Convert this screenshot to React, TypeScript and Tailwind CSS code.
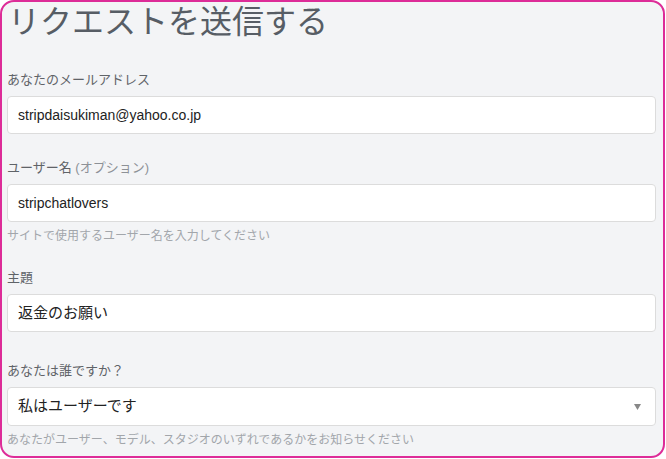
const font = { fontFamily: '"Liberation Sans", "Noto Sans CJK JP", sans-serif' };

function Label({ children }: { children: React.ReactNode }) {
  return <div className="text-[13px] leading-[18px] text-[#5f6368]">{children}</div>;
}

function Field({ value, big }: { value: string; big?: boolean }) {
  return (
    <div
      className={`mt-[7px] h-[38px] flex items-center px-[10px] bg-white border border-[#dcdcdc] rounded-[4px] text-[#222] ${
        big ? 'text-[15px]' : 'text-[14px]'
      }`}
    >
      {value}
    </div>
  );
}

function Help({ children }: { children: React.ReactNode }) {
  return <div className="mt-[6px] text-[12px] leading-[16px] text-[#a2a6ab]">{children}</div>;
}

export default function App() {
  return (
    <div
      style={font}
      className="w-[665px] h-[458px] bg-[#f3f4f6] border-2 border-[#dd2c98] rounded-[14px] pl-[5px] pr-[7px] overflow-hidden"
    >
      <h1 className="text-[32px] leading-[40px] text-[#575d65] font-normal pl-[1px]">リクエストを送信する</h1>

      <div className="mt-[29px]">
        <Label>あなたのメールアドレス</Label>
        <Field value="stripdaisukiman@yahoo.co.jp" />
      </div>

      <div className="mt-[25px]">
        <Label>
          ユーザー名 <span className="text-[#8d9197]">(オプション)</span>
        </Label>
        <Field value="stripchatlovers" />
        <Help>サイトで使用するユーザー名を入力してください</Help>
      </div>

      <div className="mt-[25px]">
        <Label>主題</Label>
        <Field value="返金のお願い" big />
      </div>

      <div className="mt-[30px]">
        <Label>あなたは誰ですか？</Label>
        <div className="mt-[7px] h-[39px] flex items-center justify-between pl-[10px] pr-[14px] bg-white border border-[#dcdcdc] rounded-[4px] text-[15px] text-[#222]">
          <span>私はユーザーです</span>
          <svg width="7" height="6" viewBox="0 0 7 6">
            <path d="M0 0 L7 0 L3.5 6 Z" fill="#888" />
          </svg>
        </div>
        <Help>あなたがユーザー、モデル、スタジオのいずれであるかをお知らせください</Help>
      </div>
    </div>
  );
}
